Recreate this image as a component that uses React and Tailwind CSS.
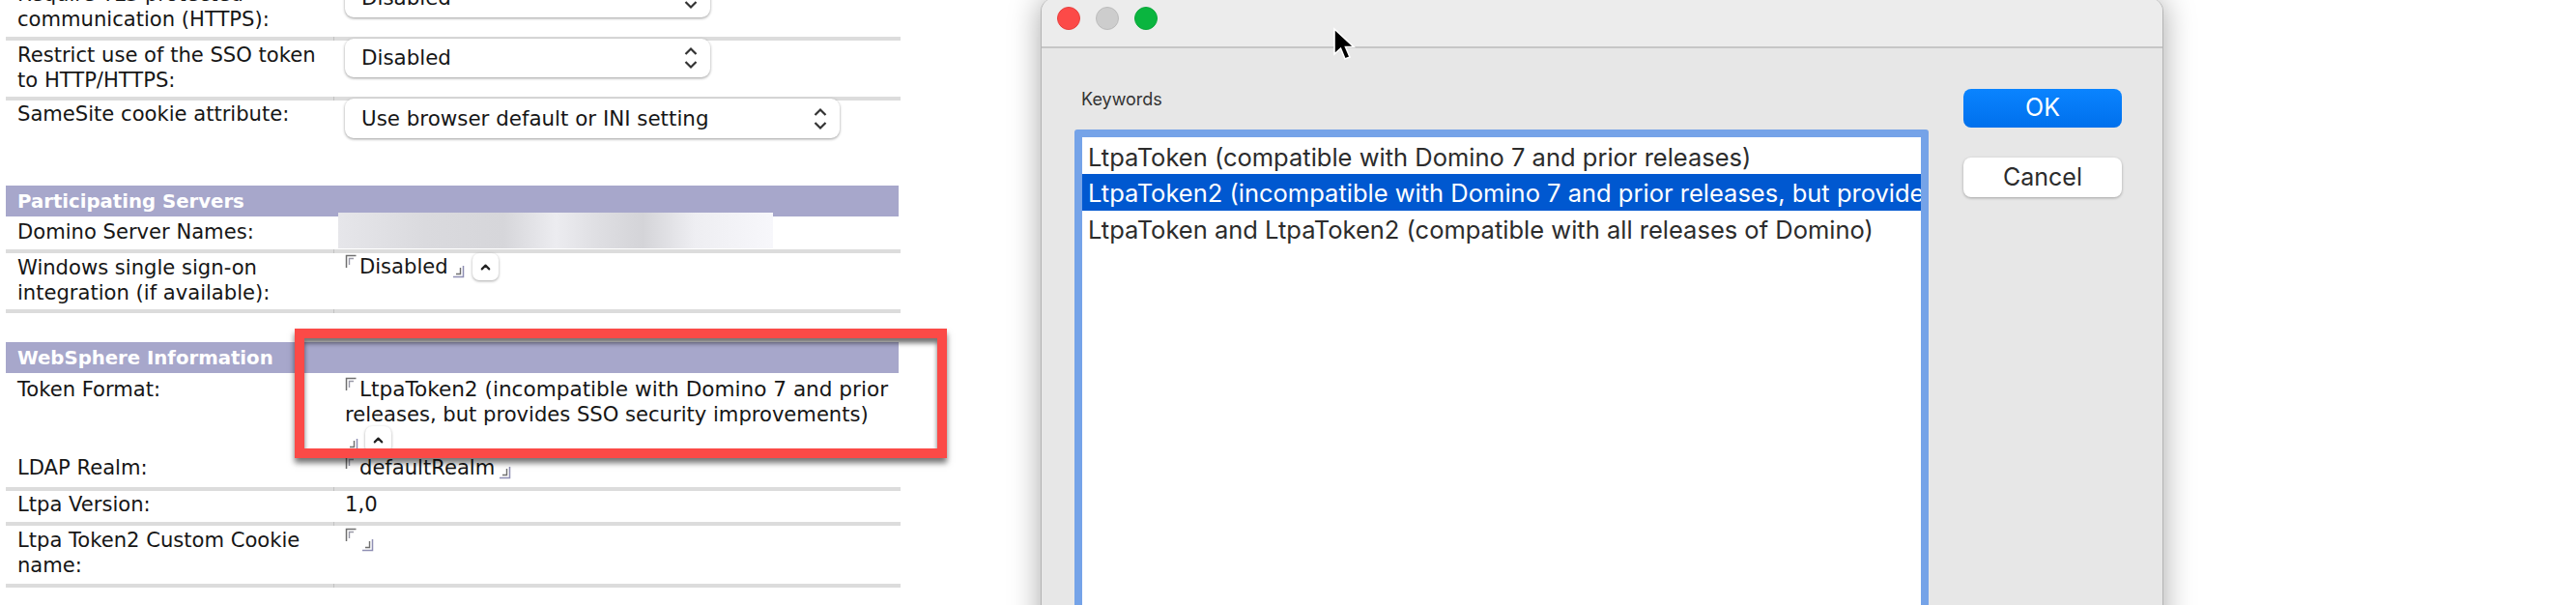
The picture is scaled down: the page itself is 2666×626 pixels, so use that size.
import React from "react";
import { ChevronUp } from "lucide-react";

const Open = () => (
  <svg width="12" height="14" viewBox="0 0 12 14" className="inline-block align-[6px] mr-[3px]" fill="none">
    <path d="M1.5 14V1.5H11.5" stroke="#707070" strokeWidth="1.5" />
    <path d="M4.5 11V4.5H9" stroke="#9a9aa8" strokeWidth="1.4" />
  </svg>
);
const Close = ({ className = "ml-[5px]" }) => (
  <svg width="12" height="13" viewBox="0 0 12 13" className={`inline-block align-[-5px] ${className}`} fill="none">
    <path d="M10.5 0V11.5H0" stroke="#8f8fb4" strokeWidth="1.5" />
    <path d="M7.5 2V8.5H3" stroke="#707070" strokeWidth="1.4" />
  </svg>
);
const Twisty = ({ className = "" }) => (
  <span className={`inline-flex items-center justify-center w-[27px] h-[28px] rounded-[7px] bg-white shadow-[0_1px_3px_rgba(0,0,0,0.35)] align-top ${className}`}>
    <ChevronUp size={15} strokeWidth={3.4} className="text-[#222]" />
  </span>
);
const Rule = () => (
  <div className="flex h-1 bg-[#dcdcdc] shrink-0">
    <div className="w-[339px]" />
    <div className="w-px bg-[#c2c2c2]" />
  </div>
);
const Select = ({ children, className }) => (
  <div className={`flex items-center justify-between h-[40px] pl-[17px] pr-[12px] rounded-[9px] bg-white text-[21.4px] shadow-[0_1px_3px_rgba(0,0,0,0.4)] ${className}`}>
    <span>{children}</span>
    <svg width="16" height="24" viewBox="0 0 16 24" fill="none" stroke="#333" strokeWidth="2.2">
      <path d="M2.5 8L8 2.5L13.5 8" />
      <path d="M2.5 16L8 21.5L13.5 16" />
    </svg>
  </div>
);
const Row = ({ h, label, labelPt = "pt-[2px]", children, valueClass = "" }) => (
  <div className={`flex shrink-0 ${h}`}>
    <div className={`w-[340px] pl-[12px] ${labelPt}`}>{label}</div>
    <div className={`w-[574px] pl-[11px] ${valueClass}`}>{children}</div>
  </div>
);
const Header = ({ children }) => (
  <div className="h-[32px] w-[924px] shrink-0 bg-[#a7a7cb] pl-[12px] text-white font-bold text-[19.7px] leading-[33px]">{children}</div>
);

export default function App() {
  return (
    <div className="relative flex w-[2666px] h-[626px] overflow-hidden bg-white">
      <div className="ml-[6px] w-[926px] shrink-0 -mt-[21px] flex flex-col font-['DejaVu_Sans',sans-serif] text-[21.1px] leading-[26px] text-[#161616]">
        <Row h="h-[59px]" label={<>Require TLS protected<br />communication (HTTPS):</>}>
          <Select className="w-[378px] -mt-[1px] h-[40px]">Disabled</Select>
        </Row>
        <Rule />
        <Row h="h-[58px]" label={<>Restrict use of the SSO token<br />to HTTP/HTTPS:</>}>
          <Select className="w-[378px] -mt-[2px]">Disabled</Select>
        </Row>
        <Rule />
        <Row h="h-[88px]" labelPt="pt-[1px]" label="SameSite cookie attribute:">
          <Select className="w-[512px] -mt-[2px] h-[41px]">Use browser default or INI setting</Select>
        </Row>
        <Header>Participating Servers</Header>
        <Row h="h-[34px]" labelPt="pt-[3px]" label="Domino Server Names:" />
        <Rule />
        <Row h="h-[58px]" labelPt="pt-[2px]" valueClass="pt-[1px]" label={<>Windows single sign-on<br />integration (if available):</>}>
          <Open />Disabled<Close /><Twisty className="ml-[8px] -mt-[1px]" />
        </Row>
        <Rule />
        <div className="h-[30px] shrink-0" />
        <Header>WebSphere Information</Header>
        <Row h="h-[84px]" labelPt="pt-[4px]" valueClass="pt-[4px] leading-[26px]" label="Token Format:">
          <Open /><span className="text-[21.6px]">LtpaToken2 (incompatible with Domino 7 and prior</span><br />releases, but provides SSO security improvements)<br />
          <Close className="ml-[2px]" /><Twisty className="ml-[7px] -mt-[1px]" />
        </Row>
        <Row h="h-[34px]" labelPt="pt-[1px]" valueClass="pt-[1px]" label="LDAP Realm:">
          <Open />defaultRealm<Close />
        </Row>
        <Rule />
        <Row h="h-[32px]" labelPt="pt-[1px]" valueClass="pt-[1px]" label="Ltpa Version:">1,0</Row>
        <Rule />
        <Row h="h-[60px]" labelPt="pt-[2px]" valueClass="pt-[2px]" label={<>Ltpa Token2 Custom Cookie<br />name:</>}>
          <Open /><Close className="ml-[3px]" />
        </Row>
        <Rule />
      </div>

      <div className="ml-[145px] -mt-[2px] w-[1162px] h-[700px] shrink-0 flex flex-col rounded-t-[14px] border-x border-[#b4b4b4] bg-[#e7e7e7] shadow-[0_0_32px_rgba(0,0,0,0.35)] font-['Inter',sans-serif] text-[#2c2c2c]">
        <div className="h-[52px] shrink-0 flex items-center gap-[16px] pl-[16px] rounded-t-[14px] bg-[#ececec] border-b-2 border-[#c6c6c6] pb-[8px]">
          <span className="w-[24px] h-[24px] rounded-full bg-[#fc4a48] border border-[#e8403e]" />
          <span className="w-[24px] h-[24px] rounded-full bg-[#cdcdcd] border border-[#bcbcbc]" />
          <span className="w-[24px] h-[24px] rounded-full bg-[#0ab53f] border border-[#0aa83a]" />
        </div>
        <div className="flex pt-[42px] pl-[34px]">
          <div className="w-[884px] shrink-0">
            <div className="ml-[7px] mb-[20px] text-[18px] leading-[22px] text-[#333]">Keywords</div>
            <div className="h-[520px] border-[8px] border-[#75a3e8] rounded-[3px] bg-white text-[25.5px] leading-[38px]">
              <div className="px-[6px] h-[38px] pt-[2px] whitespace-nowrap overflow-hidden">LtpaToken (compatible with Domino 7 and prior releases)</div>
              <div className="px-[6px] h-[38px] pt-[1px] whitespace-nowrap overflow-hidden bg-[#0058d0] text-white">LtpaToken2 (incompatible with Domino 7 and prior releases, but provides SSO security improvements)</div>
              <div className="px-[6px] h-[38px] pt-[1px] whitespace-nowrap overflow-hidden">LtpaToken and LtpaToken2 (compatible with all releases of Domino)</div>
            </div>
          </div>
          <div className="ml-[36px] w-[164px] flex flex-col gap-[31px] text-[25px]">
            <div className="h-[40px] rounded-[8px] bg-[linear-gradient(#0a84ff,#0070ec)] text-white flex items-center justify-center">OK</div>
            <div className="h-[41px] rounded-[8px] bg-white shadow-[0_1px_3px_rgba(0,0,0,0.3)] flex items-center justify-center">Cancel</div>
          </div>
        </div>
      </div>

      <div className="absolute left-[350px] top-[220px] w-[450px] h-[37px] bg-[linear-gradient(90deg,#e6e6ea,#dadade_20%,#d6d6da_38%,#ececf0_50%,#dedee2_60%,#d4d4d8_70%,#eeeef2_82%,#f7f7fb)]" />

      <div className="absolute left-[305px] top-[340px] w-[675px] h-[134px] border-[10px] border-[#fb4a47] shadow-[0_5px_6px_rgba(0,0,0,0.55),inset_0_5px_5px_rgba(0,0,0,0.55)]" />

      <svg className="absolute left-[1379px] top-[28px]" width="26" height="36" viewBox="0 0 26 36">
        <path d="M2 2V28L8.5 22L13 33L18 31L13.5 20.5H22Z" fill="#000" stroke="#fff" strokeWidth="1.6" />
      </svg>
    </div>
  );
}
